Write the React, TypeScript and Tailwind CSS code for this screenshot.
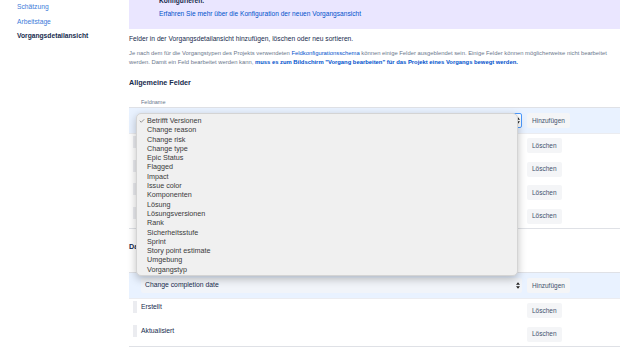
import { Check } from 'lucide-react'

const OPTIONS = [
  'Betrifft Versionen',
  'Change reason',
  'Change risk',
  'Change type',
  'Epic Status',
  'Flagged',
  'Impact',
  'Issue color',
  'Komponenten',
  'Lösung',
  'Lösungsversionen',
  'Rank',
  'Sicherheitsstufe',
  'Sprint',
  'Story point estimate',
  'Umgebung',
  'Vorgangstyp',
]

function Arrows() {
  return (
    <svg width="4" height="7" viewBox="0 0 4 7" className="shrink-0">
      <path d="M0 2.8 L2 0.3 L4 2.8 Z" fill="#222" />
      <path d="M0 4.2 L2 6.7 L4 4.2 Z" fill="#222" />
    </svg>
  )
}

function Btn({ label }: { label: string }) {
  return (
    <button
      type="button"
      className="flex h-[15px] items-center rounded-[2px] bg-[#F4F5F7] px-[5px] text-[6.5px] text-[#42526E]"
    >
      {label}
    </button>
  )
}

function FieldRow({ name }: { name: string }) {
  return (
    <div className="flex h-[23.5px] items-center justify-between">
      <div className="flex items-center gap-[4px] self-start pt-[2px]">
        <span className="ml-[4px] h-[12px] w-[4px] bg-[#EBECF0]" />
        <span className="text-[6.8px] leading-[12px] text-[#172B4D]">{name}</span>
      </div>
      <div className="w-[93px]">
        <Btn label="Löschen" />
      </div>
    </div>
  )
}

function AddRow({ value, focused }: { value: string; focused?: boolean }) {
  return (
    <div className="flex h-[25px] items-center justify-between bg-[#E9F2FF]">
      <div
        className={
          focused
            ? 'ml-[12px] flex h-[15px] w-[381px] items-center justify-between rounded-[2px] border border-[#4C9AFF] bg-white pl-[3px] pr-[1px]'
            : 'ml-[12px] flex h-[15px] w-[381px] items-center justify-between rounded-[2px] bg-[#F1F4F9] pl-[4px] pr-[2px]'
        }
      >
        <span className="text-[6.8px] text-[#172B4D]">{value}</span>
        <Arrows />
      </div>
      <div className="w-[93px]">
        <Btn label="Hinzufügen" />
      </div>
    </div>
  )
}

export default function App() {
  return (
    <div
      className="relative flex h-[354px] w-[636px] overflow-hidden bg-white text-[#172B4D]"
      style={{ fontFamily: '"Liberation Sans", Arial, sans-serif' }}
    >
      {/* Sidebar */}
      <nav className="flex w-[129px] shrink-0 flex-col pl-[17px] text-[6.7px] leading-[14.5px]">
        <a className="text-[#3D7BD9]">Schätzung</a>
        <a className="text-[#3D7BD9]">Arbeitstage</a>
        <span className="font-bold text-[#172B4D]">Vorgangsdetailansicht</span>
      </nav>

      {/* Content */}
      <main className="flex w-[491px] flex-col">
        <div className="-mt-[6px] bg-[#EAE6FF] pb-[9px] pl-[30px] text-[6.6px] leading-[13px]">
          <p className="font-bold">Konfigurieren.</p>
          <a className="text-[#0052CC]">Erfahren Sie mehr über die Konfiguration der neuen Vorgangsansicht</a>
        </div>

        <p className="mt-[5px] text-[6.7px] leading-[10px]">
          Felder in der Vorgangsdetailansicht hinzufügen, löschen oder neu sortieren.
        </p>
        <p className="mt-[5px] whitespace-nowrap text-[5.85px] leading-[9px] text-[#6B778C]">
          Je nach dem für die Vorgangstypen des Projekts verwendeten{' '}
          <a className="text-[#0052CC]">Feldkonfigurationsschema</a> können einige Felder ausgeblendet sein. Einige
          Felder können möglicherweise nicht bearbeitet
          <br />
          werden. Damit ein Feld bearbeitet werden kann,{' '}
          <a className="font-semibold text-[#0052CC]">
            muss es zum Bildschirm "Vorgang bearbeiten" für das Projekt eines Vorgangs bewegt werden.
          </a>
        </p>

        <h2 className="mt-[10px] text-[7.2px] font-bold leading-[12px]">Allgemeine Felder</h2>
        <div className="mt-[9px] flex h-[10px] items-center border-b border-[#DFE1E6] pl-[12px] text-[5.5px] text-[#6B778C]">
          Feldname
        </div>
        <AddRow value="Betrifft Versionen" focused />
        <div className="border-t border-[#EBECF0]">
          <FieldRow name="Bearbeiter" />
          <FieldRow name="Berichterstatter" />
          <FieldRow name="Beschreibung" />
          <FieldRow name="Fälligkeitsdatum" />
        </div>
        <div className="border-t border-[#DFE1E6]" />

        <h2 className="mt-[12px] text-[7.2px] font-bold leading-[12px]">Datumsfelder</h2>
        <div className="mt-[10px] flex h-[10px] items-center border-b border-[#DFE1E6] pl-[12px] text-[5.5px] text-[#6B778C]">
          Feldname
        </div>
        <AddRow value="Change completion date" />
        <div className="border-t border-[#EBECF0]">
          <FieldRow name="Erstellt" />
          <FieldRow name="Aktualisiert" />
        </div>
        <div className="border-t border-[#DFE1E6]" />
      </main>

      {/* Native select popup */}
      <ul className="absolute left-[136px] top-[113px] h-[163px] w-[382px] rounded-[5px] border border-[#D4D4D4] bg-[#F0F0F0] pt-[2px] shadow-[0_3px_8px_rgba(0,0,0,0.25)]">
        {OPTIONS.map((o, i) => (
          <li key={o} className="flex h-[9.3px] items-center text-[7.2px] leading-[9.3px] text-[#3a3a3a]">
            <span className="flex w-[10px] justify-center">
              {i === 0 && <Check size={6} strokeWidth={2} className="text-[#3a3a3a]" />}
            </span>
            {o}
          </li>
        ))}
      </ul>
    </div>
  )
}
